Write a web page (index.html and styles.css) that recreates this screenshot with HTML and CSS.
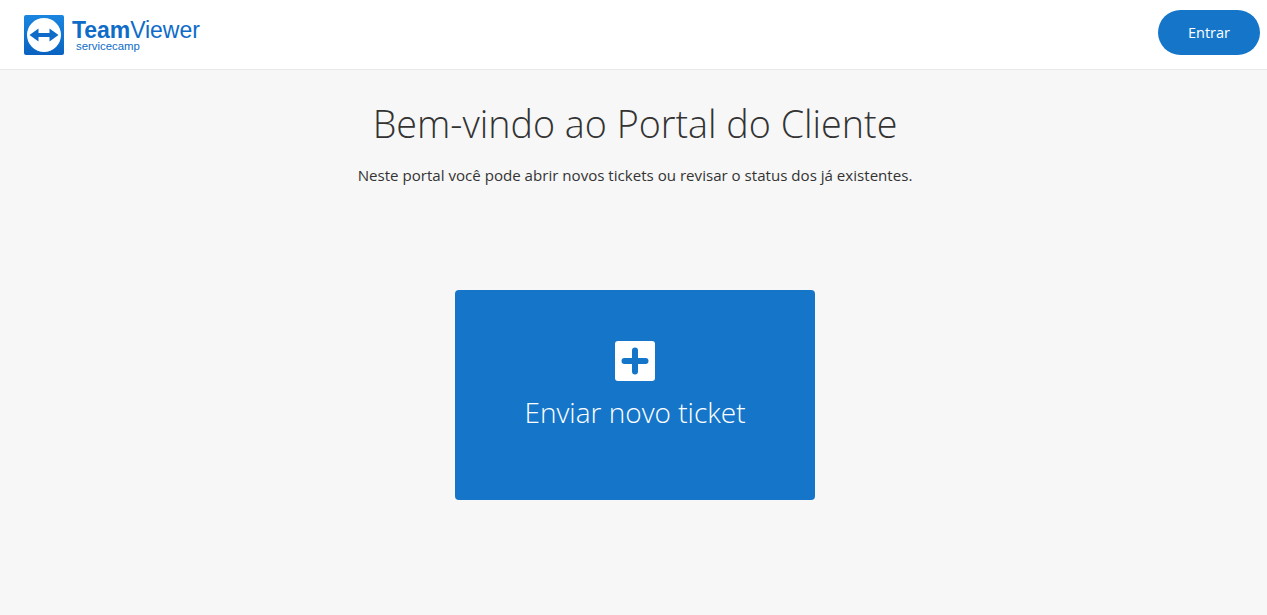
FILE: index.html
```html
<!DOCTYPE html>
<html lang="pt-BR">
<head>
    <meta charset="UTF-8">
    <meta name="viewport" content="width=device-width, initial-scale=1.0">
    <title>Portal do Cliente</title>
    <link rel="stylesheet" href="styles.css">
</head>
<body>

    <header class="top-bar">
        <a class="logo" href="#">
            <svg class="logo-icon" width="40" height="40" viewBox="0 0 40 40">
                <defs>
                    <linearGradient id="logo-bg" x1="0" y1="0" x2="0" y2="1">
                        <stop offset="0" stop-color="#1a86e0"/>
                        <stop offset="1" stop-color="#0a62c0"/>
                    </linearGradient>
                </defs>
                <rect width="40" height="40" rx="2" fill="url(#logo-bg)"/>
                <circle cx="20" cy="20" r="17" fill="#fff"/>
                <path d="M5.5 20 L14.5 13.5 V17.9 H25.5 V13.5 L34.5 20 L25.5 26.5 V22.1 H14.5 V26.5 Z" fill="#0e6cc8"/>
            </svg>
            <div class="logo-text">
                <div class="logo-name"><strong>Team</strong>Viewer</div>
                <div class="logo-sub">servicecamp</div>
            </div>
        </a>
        <a class="login-btn" href="#">Entrar</a>
    </header>

    <main class="content">
        <h1 class="title">Bem-vindo ao Portal do Cliente</h1>
        <p class="subtitle">Neste portal você pode abrir novos tickets ou revisar o status dos já existentes.</p>

        <a class="ticket-card" href="#">
            <svg class="ticket-icon" width="40" height="40" viewBox="0 0 40 40">
                <rect width="40" height="40" rx="3" fill="#fff"/>
                <path d="M20 9.5 V30.5 M9.5 20 H30.5" stroke="#1576c9" stroke-width="6" stroke-linecap="round" fill="none"/>
            </svg>
            <span class="ticket-label">Enviar novo ticket</span>
        </a>
    </main>

</body>
</html>
```

FILE: styles.css
```css
html, body {
    height: 100%;
    margin: 0;
    overflow: hidden;
}

body {
    background-color: #f7f7f7;
    color: #333;
    font-family: "Open Sans", "Noto Sans", sans-serif;
}

a {
    text-decoration: none;
}

.top-bar {
    height: 59px;
    display: flex;
    justify-content: space-between;
    align-items: flex-start;
    padding: 10px 7px 0 24px;
    background-color: #fff;
    border-bottom: 1px solid #e9e9e9;
}

.logo {
    display: flex;
    gap: 8px;
    margin-top: 5px;
}

.logo-text {
    font-family: "Liberation Sans", Arial, sans-serif;
    color: #0e6cc8;
}

.logo-name {
    font-size: 23px;
    line-height: 22px;
    margin-top: 4px;
    letter-spacing: -0.05px;
}

.logo-name strong {
    font-weight: 700;
}

.logo-sub {
    font-size: 11.4px;
    line-height: 11px;
    margin-left: 4px;
}

.login-btn {
    width: 102px;
    height: 44px;
    padding-bottom: 1px;
    display: flex;
    justify-content: center;
    align-items: center;
    background-color: #1576c9;
    color: #fff;
    font-size: 14.5px;
    border-radius: 23px;
}

.content {
    display: flex;
    flex-direction: column;
    align-items: center;
    padding-left: 3px;
}

.title {
    margin: 26px 0 0;
    font-size: 37.7px;
    line-height: 56px;
    font-weight: 300;
    color: #333;
}

.subtitle {
    margin: 12px 0 0;
    font-size: 15.1px;
    line-height: 22px;
    color: #333;
}

.ticket-card {
    width: 360px;
    height: 210px;
    margin-top: 104px;
    display: flex;
    flex-direction: column;
    align-items: center;
    padding-top: 51px;
    box-sizing: border-box;
    background-color: #1576c9;
    border-radius: 4px;
    color: #fff;
}

.ticket-label {
    margin-top: 10px;
    font-size: 28px;
    line-height: 42px;
    font-weight: 300;
}
```
